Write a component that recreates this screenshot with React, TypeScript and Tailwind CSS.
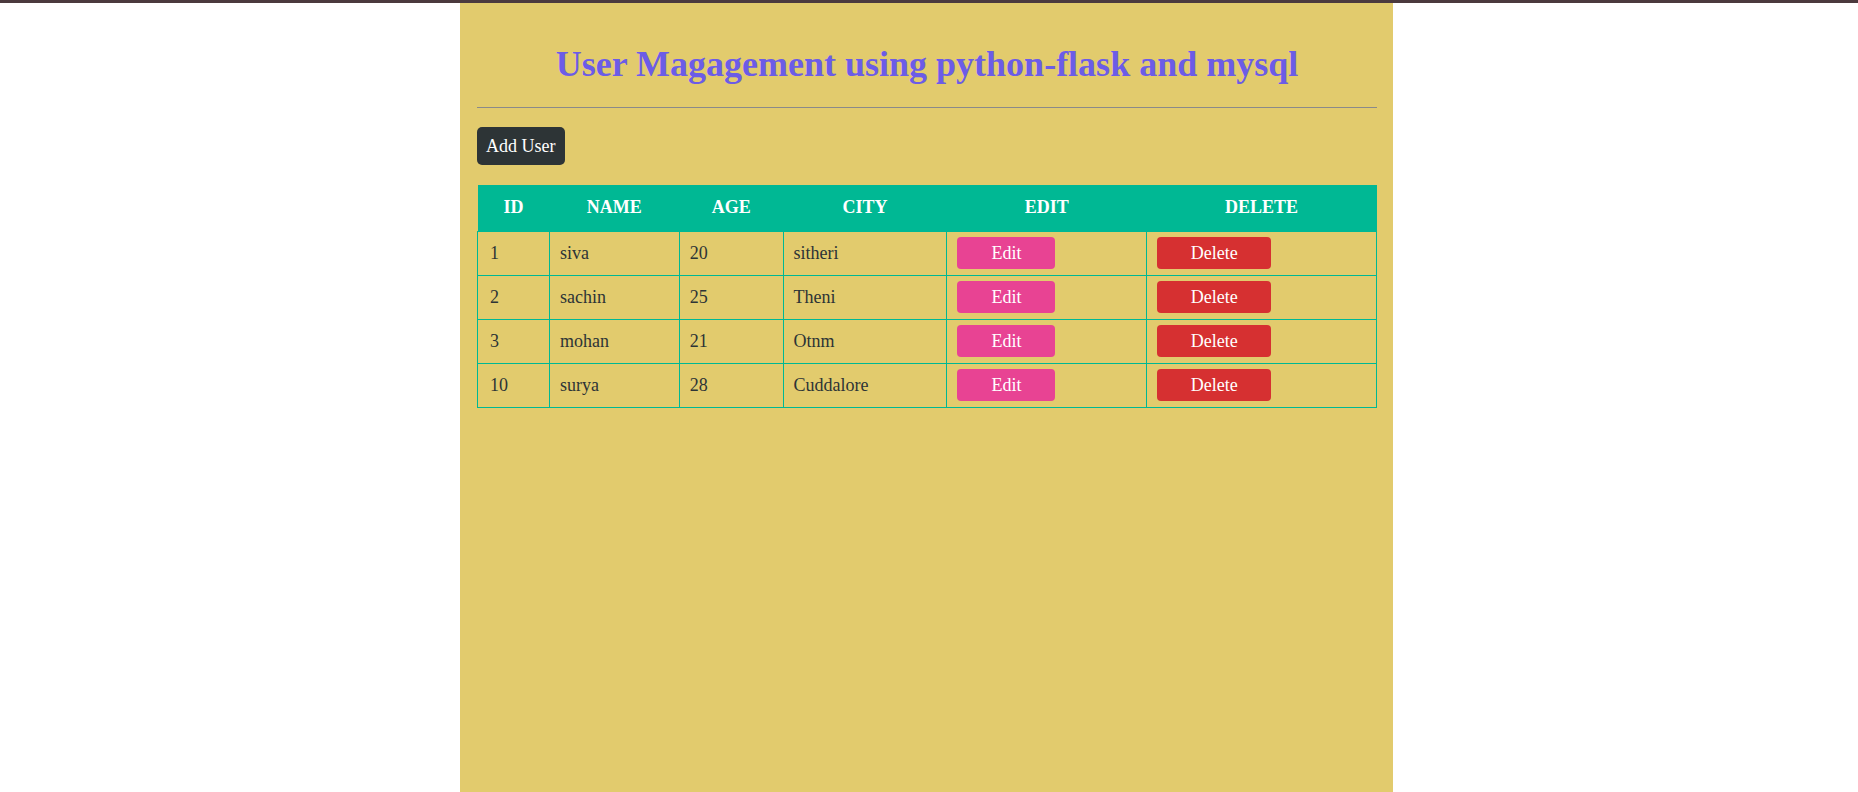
import React from 'react';

const users = [
  { id: 1, name: 'siva', age: 20, city: 'sitheri' },
  { id: 2, name: 'sachin', age: 25, city: 'Theni' },
  { id: 3, name: 'mohan', age: 21, city: 'Otnm' },
  { id: 10, name: 'surya', age: 28, city: 'Cuddalore' },
];

const App = () => {
  return (
    <div className="min-h-screen bg-white border-t-[3px] border-[#4b3a3e] font-['Liberation_Serif',serif]">
      <div className="ml-[460px] w-[933px] min-h-[789px] bg-[#e2cb6d] pl-[17px] pr-[16px] pt-[39px]">
        <h1 className="text-center text-[36px] leading-[44px] font-bold text-[#6c5ce7]">
          User Magagement using python-flask and mysql
        </h1>
        <hr className="mt-[21px] border-t border-[#8a8a8a]" />

        <button className="mt-[19px] h-[38px] px-[9px] rounded-[5px] bg-[#2d3436] text-white text-[18px]">
          Add User
        </button>

        <table className="mt-[20px] w-[900px] border-collapse text-[18px] text-[#2d3436]">
          <thead>
            <tr className="bg-[#00b894] text-white h-[46px]">
              <th className="w-[72px] font-bold">ID</th>
              <th className="w-[130px] font-bold">NAME</th>
              <th className="w-[104px] font-bold">AGE</th>
              <th className="w-[164px] font-bold">CITY</th>
              <th className="w-[200px] font-bold">EDIT</th>
              <th className="w-[230px] font-bold">DELETE</th>
            </tr>
          </thead>
          <tbody>
            {users.map((u) => (
              <tr key={u.id} className="h-[44px]">
                <td className="border border-[#00b894] px-[12px]">{u.id}</td>
                <td className="border border-[#00b894] px-[10px]">{u.name}</td>
                <td className="border border-[#00b894] px-[10px]">{u.age}</td>
                <td className="border border-[#00b894] px-[10px]">{u.city}</td>
                <td className="border border-[#00b894] px-[10px]">
                  <button className="w-[98px] h-[32px] rounded-[4px] bg-[#e84393] text-white text-[18px] align-middle">
                    Edit
                  </button>
                </td>
                <td className="border border-[#00b894] px-[10px]">
                  <button className="w-[114px] h-[32px] rounded-[4px] bg-[#d63031] text-white text-[18px] align-middle">
                    Delete
                  </button>
                </td>
              </tr>
            ))}
          </tbody>
        </table>
      </div>
    </div>
  );
};

export default App;
